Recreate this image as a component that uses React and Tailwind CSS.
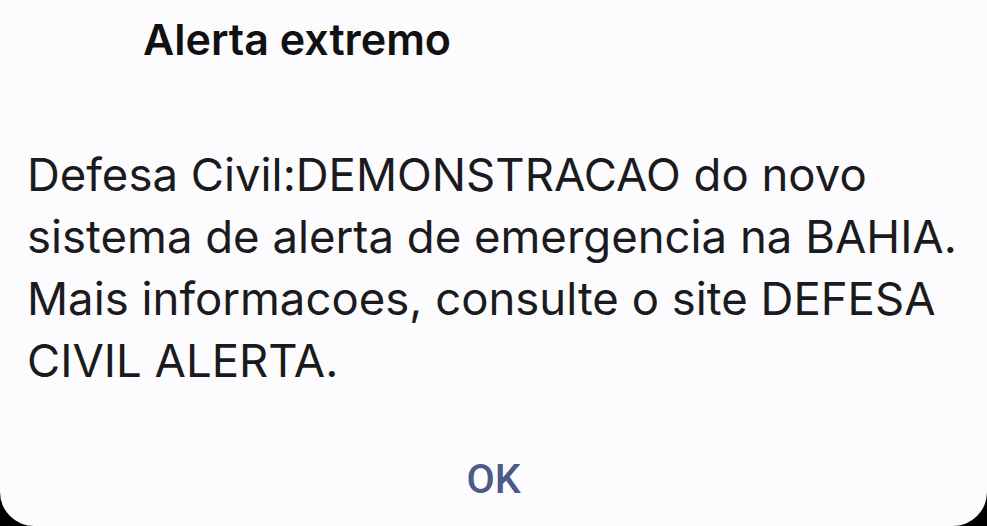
export default function App() {
  return (
    <div className="h-[526px] w-[987px] bg-black overflow-hidden" style={{ fontFamily: "Inter, Roboto, 'Noto Sans', sans-serif" }}>
      <div className="h-full w-full bg-[#fcfcfe] rounded-b-[34px] flex flex-col">
        <h1 className="pl-[143px] pt-[12px] text-[43px] leading-[54px] font-semibold text-[#111]">
          Alerta extremo
        </h1>
        <p className="pl-[27px] pr-[10px] mt-[78px] text-[45.5px] leading-[62px] text-[#1b1b1d]">
          Defesa Civil:DEMONSTRACAO do novo sistema de alerta de emergencia na BAHIA. Mais informacoes, consulte o site DEFESA CIVIL ALERTA.
        </p>
        <div className="mt-auto mb-[22px] flex justify-center" style={{ fontFamily: "Roboto, sans-serif" }}>
          <button className="text-[41px] leading-[50px] font-medium text-[#4b5a86]">OK</button>
        </div>
      </div>
    </div>
  );
}
